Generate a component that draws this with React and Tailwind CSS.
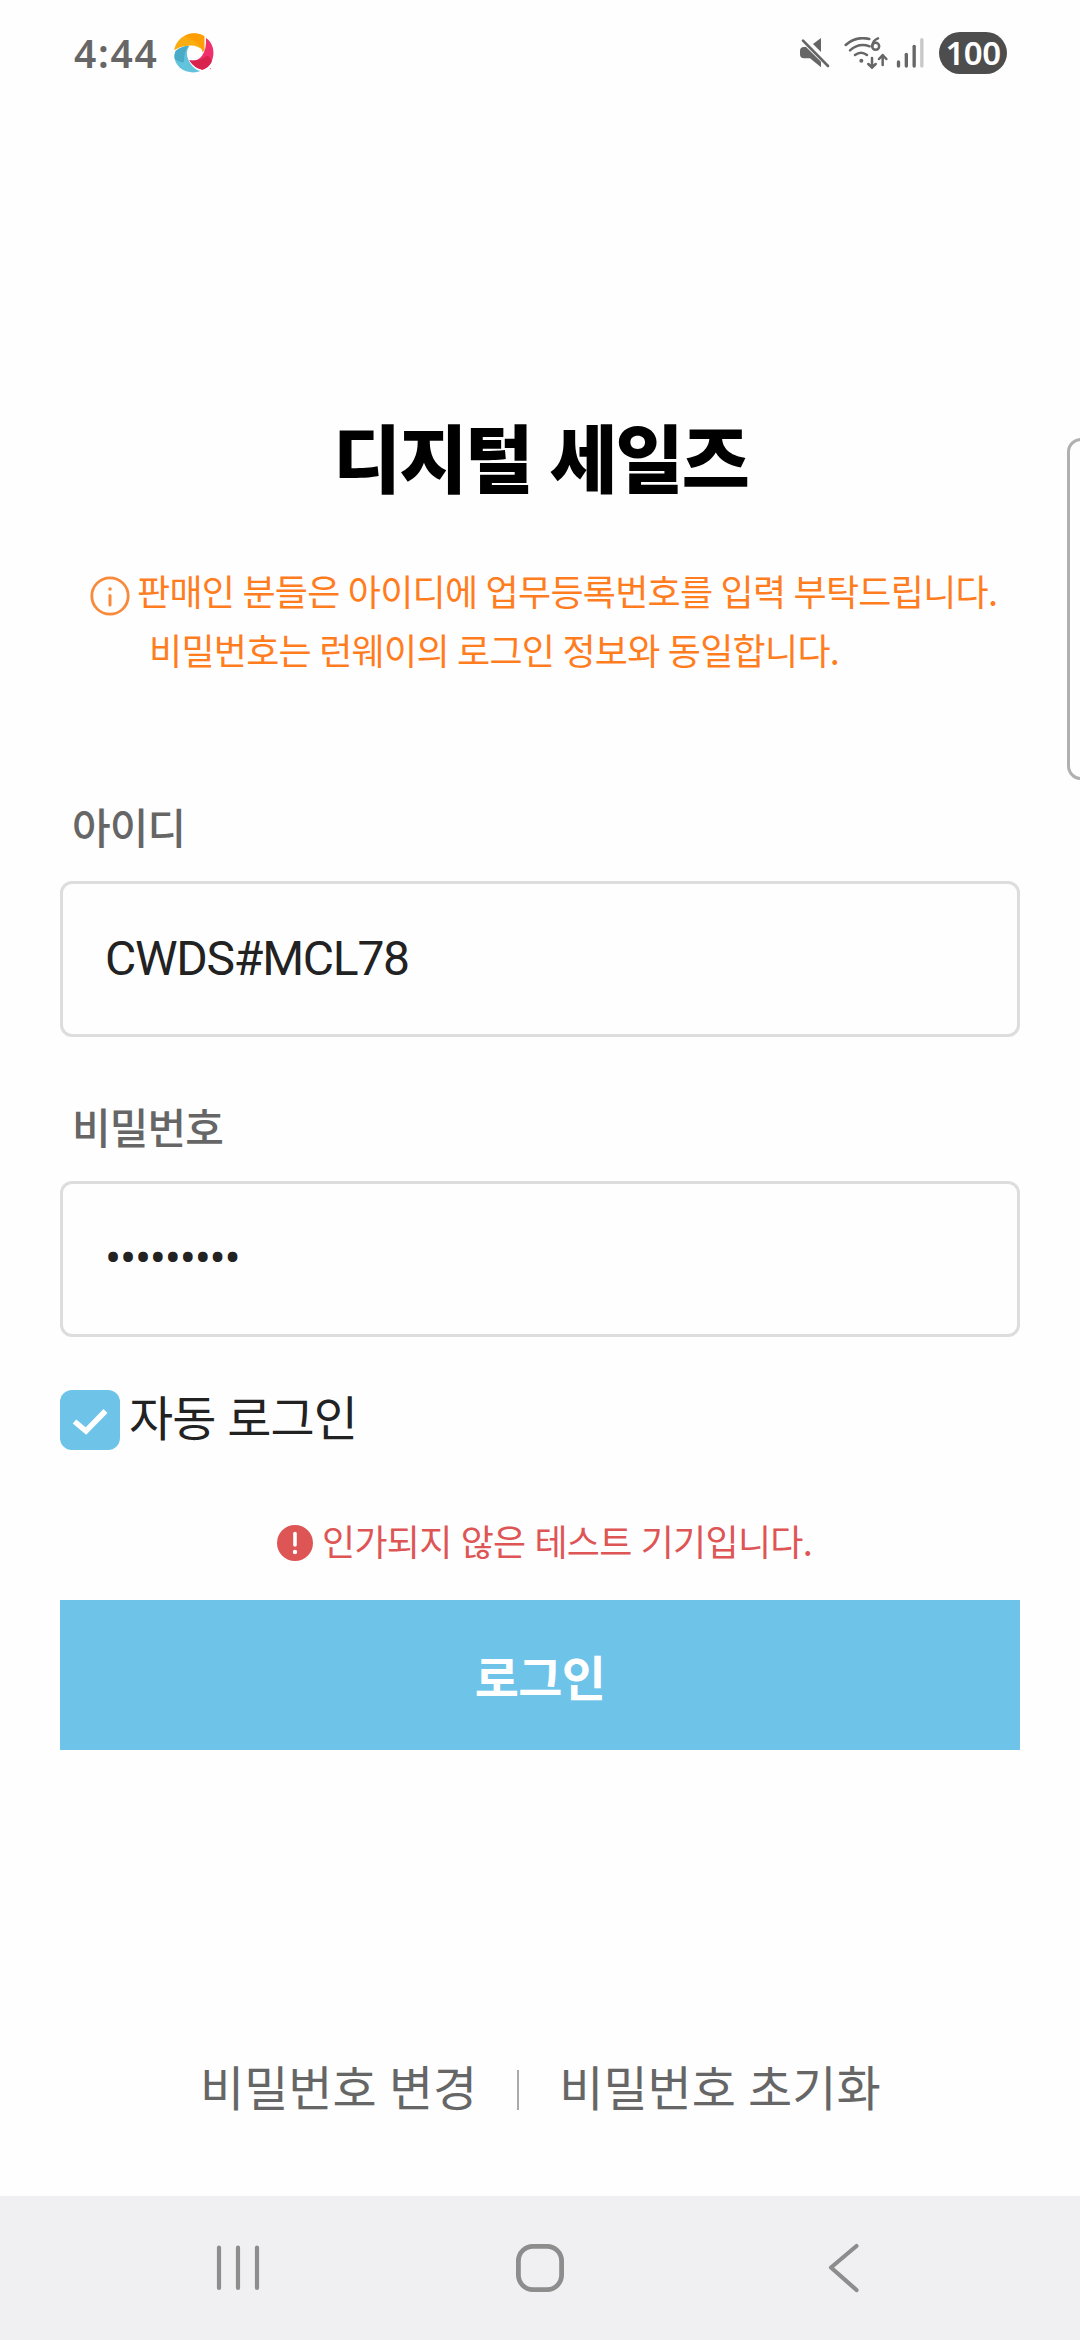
const KR = "font-['Noto_Sans_CJK_KR',sans-serif]";

function StatusBar() {
  return (
    <header className="flex h-[106px] items-center justify-between pl-[74px] pr-[73px] font-['Noto_Sans',sans-serif]">
      <div className="flex items-center">
        <span className="w-[99px] text-[39px] font-semibold leading-[60px] tracking-[1.7px] text-[#666]">4:44</span>
        <svg className="h-[42px] w-[42px]" viewBox="368 67 126 126">
          <path d="M372 118 C380 90 402 72 430 71 C442 71 454 74 462 80 V124 Q440 104 414 108 Q390 109 372 122Z" fill="#fbac10" />
          <path d="M430 71 C442 71 454 74 462 80 V124 L456 128 Q452 98 408 82 L404 78 Q418 71 430 71Z" fill="#ff9800" opacity=".75" />
          <path d="M467 85 C484 97 491 115 489 136 C486 160 474 175 456 180 Q432 176 417 152 Q440 158 455 138 Q469 120 467 85Z" fill="#f0306d" />
          <path d="M417 152 Q446 156 470 138 Q482 140 484 157 C477 169 468 177 456 180 Q432 176 417 152Z" fill="#d9234f" />
          <path d="M376 124 Q394 109 416 109 Q404 127 414 150 Q426 178 450 184 C438 190 418 190 400 182 C378 171 366 145 376 124Z" fill="#62c3dd" />
          <path d="M376 124 Q394 109 416 109 Q400 126 401 157 Q386 160 373 148 Q371 134 376 124Z" fill="#4aabc6" />
          <circle cx="480" cy="177" r="2" fill="#f0709a" />
        </svg>
      </div>
      <div className="flex items-center">
        <svg className="mr-[14px] h-8 w-[31px]" viewBox="57 81 93 96">
          <path d="M123 84 V126 L99 102Z" fill="#666" />
          <path d="M72 111 H78 L123 155 V172 L90 145 H72 Q60 145 60 133 V123 Q60 111 72 111Z" fill="#666" />
          <path d="M69 92 L144 168" fill="none" stroke="#666" strokeWidth="8" strokeLinecap="round" />
        </svg>
        <svg className="mr-[8px] h-8 w-[44px]" viewBox="192 81 132 96" fill="none" stroke="#666" strokeWidth="7.500" strokeLinecap="round" strokeLinejoin="round">
          <path d="M197 105 Q227 77 268 87" />
          <path d="M210 121 Q237 97 269 109" />
          <path d="M225 135 Q243 121 261 135" />
          <circle cx="244" cy="152" r="6" fill="#666" stroke="none" />
          <path d="M294 85 Q278 91 277 108" />
          <circle cx="287" cy="109" r="10.5" />
          <path d="M276 144 V173 M265 162 L276 173 L287 162" />
          <path d="M308 165 V136 M297 147 L308 135 L319 147" />
        </svg>
        <svg className="mr-[15px] h-8 w-7" viewBox="349 80 84 96" strokeWidth="10" strokeLinecap="round" stroke="#666">
          <path d="M356.500 155 V167" />
          <path d="M380 132 V167" />
          <path d="M403.500 108 V167" />
          <path d="M426.500 88 V167" stroke="#c8c8c8" />
        </svg>
        <div className="flex h-[42px] w-[68px] items-center justify-center rounded-full bg-[#4d4d4d] text-[33px] font-semibold leading-[42px] tracking-[-0.5px] text-white">100</div>
      </div>
    </header>
  );
}

function Field({ label, value }) {
  return (
    <div className="h-[300px]">
      <div className="pl-[12px] text-[42px] font-medium leading-[60px] tracking-[-0.9px] text-[#666]">{label}</div>
      <div className="mt-[25px] flex h-[156px] items-center rounded-[12px] border-[3px] border-[#ddd] pl-[42px] font-['Roboto',sans-serif] text-[48px] leading-[60px] tracking-[-1.25px] text-[#222]">
        {value}
      </div>
    </div>
  );
}

export default function App() {
  return (
    <div className={`relative flex h-[2340px] w-[1080px] flex-col overflow-hidden bg-[#fefefe] ${KR}`}>
      <StatusBar />
      <div className="absolute left-[1067px] top-[438px] h-[342px] w-[30px] rounded-[14px] border-[3px] border-[#b0b0b0]" />

      <main className="flex flex-1 flex-col px-[60px]">
        <h1 className="mt-[299px] whitespace-nowrap pl-[273px] text-[74px] font-black leading-[100px] tracking-[-1.9px] text-black [word-spacing:2.8px]">디지털 세일즈</h1>

        <div className="mt-[56px] flex whitespace-nowrap pl-[30px] text-[36px] leading-[59px] tracking-[-0.72px] text-[#ff7d1f] [word-spacing:0.85px]">
          <svg className="mt-[15px] h-10 w-10 shrink-0" viewBox="0 0 40 40" fill="none" stroke="#f98a3c" strokeWidth="2.800">
            <circle cx="20" cy="20" r="18.200" />
            <path d="M20 19.500 V29" strokeWidth="3" strokeLinecap="round" />
            <circle cx="20" cy="13" r="1.800" fill="#f98a3c" stroke="none" />
          </svg>
          <div className="ml-[7px]">
            <p>판매인 분들은 아이디에 업무등록번호를 입력 부탁드립니다.</p>
            <p className="pl-[12px]">비밀번호는 런웨이의 로그인 정보와 동일합니다.</p>
          </div>
        </div>

        <div className="mt-[117px]">
          <Field label="아이디" value="CWDS#MCL78" />
          <Field label="비밀번호" value="•••••••••" />
        </div>

        <label className="-mt-[6px] flex h-[60px] items-center text-[48px] leading-[60px] tracking-[-0.96px] text-[#222] [word-spacing:2.1px]">
          <svg className="mr-[9px] h-[60px] w-[60px] rounded-[12px] bg-[#6ec3e9]" viewBox="0 0 60 60" fill="none" stroke="#fff" strokeWidth="5.500">
            <path d="M14.500 31.500 L26 41 L45.500 21" />
          </svg>
          <span className="mb-[10px]">자동 로그인</span>
        </label>

        <div className="mt-[60px] flex h-[60px] items-center pl-[217px] text-[36px] leading-[60px] tracking-[-0.7px] text-[#de5555] [word-spacing:1.6px]">
          <svg className="mr-[9px] mt-[5px] h-9 w-9" viewBox="0 0 36 36">
            <circle cx="18" cy="18" r="18" fill="#de5555" />
            <path d="M18 8.500 V20" stroke="#fff" strokeWidth="3.600" strokeLinecap="round" />
            <circle cx="18" cy="27" r="2.200" fill="#fff" />
          </svg>
          인가되지 않은 테스트 기기입니다.
        </div>

        <button className="mt-[30px] h-[150px] w-full bg-[#6ec3e9] text-[48px] font-bold leading-[60px] tracking-[-0.6px] text-white">로그인</button>

        <div className="mt-[305px] flex h-[60px] items-center whitespace-nowrap pl-[140px] text-[48px] leading-[60px] text-[#666] [word-spacing:1.5px]">
          <span>비밀번호 변경</span>
          <span className="mt-[10px] ml-[40px] mr-[40px] h-10 w-[2px] bg-[#aaa]" />
          <span>비밀번호 초기화</span>
        </div>
      </main>

      <nav className="flex h-[144px] items-center bg-[#f0f0f3] pl-[214px] text-[#8d8d8d]">
        <svg className="h-[50px] w-[48px]" viewBox="0 0 48 50" stroke="currentColor" strokeWidth="4.200" strokeLinecap="round">
          <path d="M5 4.500 V45 M24 4.500 V45 M43 4.500 V45" />
        </svg>
        <svg className="ml-[253px] h-[50px] w-[50px]" viewBox="0 0 50 50" fill="none" stroke="currentColor" strokeWidth="4.800">
          <rect x="3.400" y="3.400" width="43.200" height="43.200" rx="14.500" />
        </svg>
        <svg className="ml-[262px] h-[50px] w-[34px]" viewBox="0 0 34 50" fill="none" stroke="currentColor" strokeWidth="4.200" strokeLinecap="round" strokeLinejoin="round">
          <path d="M29.500 3 L4 24.500 L29.500 47" />
        </svg>
      </nav>
    </div>
  );
}
